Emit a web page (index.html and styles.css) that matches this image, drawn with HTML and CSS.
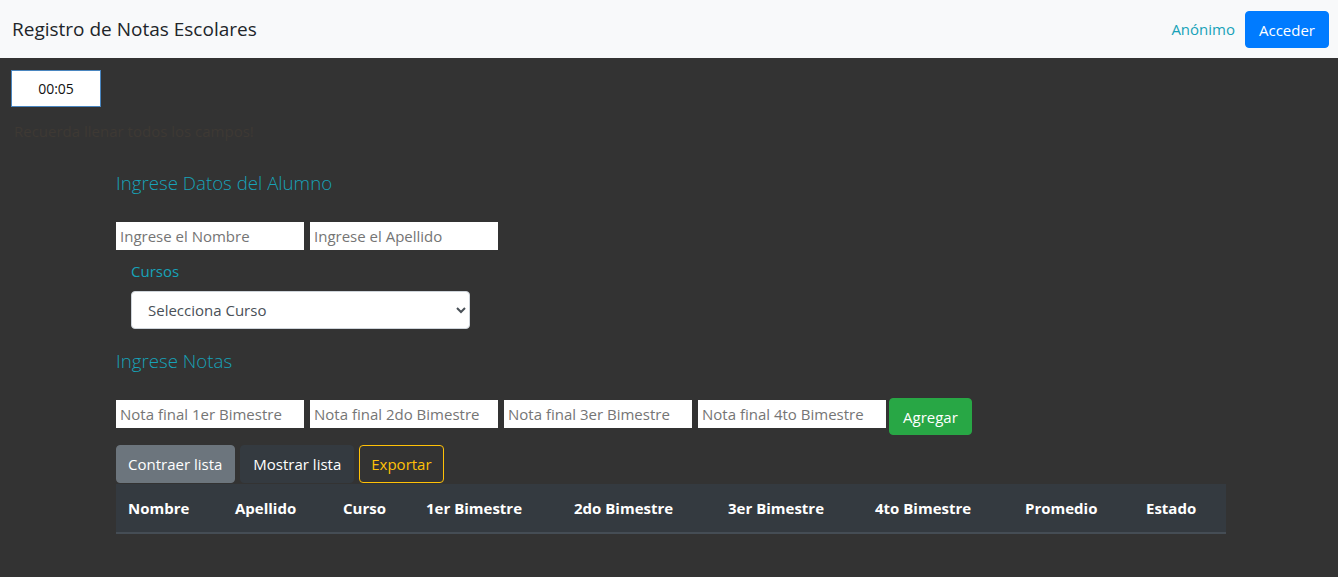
FILE: index.html
```html
<!DOCTYPE html>
<html lang="es">
<head>
<meta charset="utf-8">
<title>Registro de Notas Escolares</title>
<link rel="stylesheet" href="styles.css">
</head>
<body>
<nav class="navbar">
  <span class="brand">Registro de Notas Escolares</span>
  <div class="nav-right">
    <span class="user">Anónimo</span>
    <button class="btn btn-primary">Acceder</button>
  </div>
</nav>
<div class="timer-row">
  <input class="timer" type="text" value="00:05">
</div>
<p class="hint">Recuerda llenar todos los campos!</p>
<main class="main">
  <h4 class="section-title first">Ingrese Datos del Alumno</h4>
  <div class="inputs">
    <input class="field" type="text" placeholder="Ingrese el Nombre">
    <input class="field" type="text" placeholder="Ingrese el Apellido">
  </div>
  <div class="course">
    <label class="course-label">Cursos</label>
    <select class="select">
      <option>Selecciona Curso</option>
    </select>
  </div>
  <h4 class="section-title second">Ingrese Notas</h4>
  <div class="inputs notes">
    <input class="field" type="text" placeholder="Nota final 1er Bimestre">
    <input class="field" type="text" placeholder="Nota final 2do Bimestre">
    <input class="field" type="text" placeholder="Nota final 3er Bimestre">
    <input class="field" type="text" placeholder="Nota final 4to Bimestre">
    <button class="btn btn-success">Agregar</button>
  </div>
  <div class="actions">
    <button class="btn btn-secondary">Contraer lista</button>
    <button class="btn btn-dark">Mostrar lista</button>
    <button class="btn btn-outline-warning">Exportar</button>
  </div>
  <table class="table">
    <thead>
      <tr>
        <th class="c1">Nombre</th>
        <th class="c2">Apellido</th>
        <th class="c3">Curso</th>
        <th class="c4">1er Bimestre</th>
        <th class="c5">2do Bimestre</th>
        <th class="c6">3er Bimestre</th>
        <th class="c7">4to Bimestre</th>
        <th class="c8">Promedio</th>
        <th class="c9">Estado</th>
      </tr>
    </thead>
    <tbody></tbody>
  </table>
</main>
</body>
</html>
```

FILE: styles.css
```css
* { box-sizing: border-box; }
html, body {
  margin: 0;
  padding: 0;
}
body {
  background: #333333;
  font-family: "Open Sans", "Noto Sans", sans-serif;
  font-size: 15px;
  line-height: 1.5;
  color: #212529;
  height: 577px;
  overflow: hidden;
}
.navbar {
  height: 58px;
  background: #f8f9fa;
  display: flex;
  align-items: center;
  justify-content: space-between;
  padding: 0 9px 0 12px;
}
.brand {
  font-size: 19px;
  color: #212529;
}
.nav-right {
  display: flex;
  align-items: center;
  gap: 10px;
}
.user {
  color: #17a2b8;
  font-size: 15px;
}
.btn {
  font-family: inherit;
  font-size: 15px;
  line-height: 24px;
  height: 38px;
  padding: 6px 12px;
  border-radius: 4px;
  border: 1px solid transparent;
  cursor: pointer;
}
.nav-right .btn { height: 37px; padding: 6px 13px; }
.btn-primary { background: #007bff; color: #fff; border-color: #007bff; }
.btn-success { background: #28a745; color: #fff; border-color: #28a745; padding: 6px 13px; height: 37px; }
.btn-secondary { background: #6c757d; color: #fff; border-color: #6c757d; padding: 6px 12px 6px 11px; }
.btn-dark { background: #343a40; color: #fff; border-color: #343a40; padding: 6px 12px; }
.btn-outline-warning { background: transparent; color: #ffc107; border-color: #ffc107; padding: 6px 11px; }

.timer-row {
  padding: 12px 0 0 11px;
}
.timer {
  display: block;
  width: 90px;
  height: 37px;
  border: 1px solid #4a86c0;
  background: #fff;
  text-align: center;
  font-family: inherit;
  font-size: 14px;
  color: #111;
  outline: none;
}
.hint {
  margin: 12px 0 0 14px;
  color: #3e3934;
  font-size: 15px;
  line-height: 24px;
}
.main {
  width: 1110px;
  margin-left: 116px;
}
.section-title {
  margin: 0;
  color: #17a2b8;
  font-size: 18.7px;
  font-weight: 300;
  line-height: 1.2;
}
.section-title.first {
  margin-top: 29px;
}
.section-title.second {
  margin-top: 21px;
}
.inputs {
  display: flex;
  align-items: center;
  gap: 6px;
  margin-top: 28px;
}
.field {
  width: 188px;
  height: 28px;
  border: 1px solid #fff;
  background: #fff;
  font-family: inherit;
  font-size: 15px;
  padding: 1px 3px;
  color: #333;
}
.field::placeholder { color: #757575; }
.course {
  padding-left: 15px;
  display: flex;
  flex-direction: column;
  align-items: flex-start;
}
.course-label {
  color: #17a2b8;
  font-size: 15px;
  margin-top: 9px;
  line-height: 24px;
}
.select {
  margin-top: 8px;
  width: 339px;
  height: 38px;
  border-radius: 4px;
  border: 1px solid #ced4da;
  background: #fff;
  font-family: inherit;
  font-size: 15px;
  color: #495057;
  padding: 6px 12px;
}
.notes {
  margin-top: 25px;
  align-items: flex-start;
}
.notes .field { margin-top: 2px; }
.notes .btn-success { margin-left: -3px; }
.actions {
  display: flex;
  gap: 5px;
  margin-top: 10px;
}
.table {
  width: 1110px;
  border-collapse: collapse;
  margin-top: 1px;
}
.table th {
  background: #343a40;
  color: #fff;
  text-align: left;
  font-weight: 700;
  font-size: 15px;
  padding: 12px;
  border-bottom: 2px solid #454d55;
  line-height: 24px;
}
.c1 { width: 107px; }
.c2 { width: 108px; }
.c3 { width: 83px; }
.c4 { width: 148px; }
.c5 { width: 154px; }
.c6 { width: 147px; }
.c7 { width: 150px; }
.c8 { width: 121px; }
.c9 { width: 92px; }
```
